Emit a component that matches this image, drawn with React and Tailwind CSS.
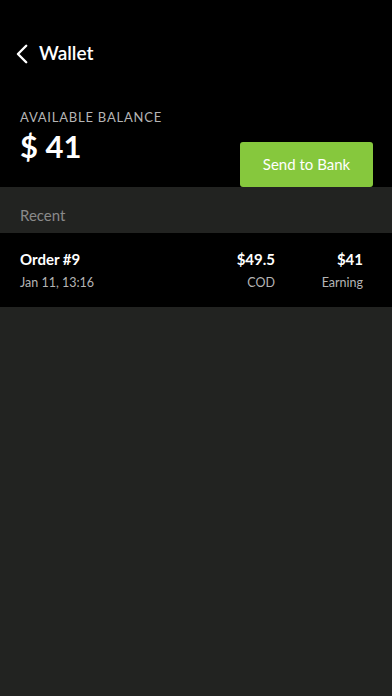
import React from "react";

const App = () => {
  return (
    <div
      className="min-h-[696px] w-full bg-[#222321] text-white"
      style={{ fontFamily: "Lato, 'Open Sans', sans-serif" }}
    >
      <div className="bg-black">
        <div className="flex h-[108px] items-center pb-[1px] pl-[13px]">
          <svg className="h-[22px] w-[22px]" viewBox="0 0 20 20" fill="none">
            <path
              d="M12 2.5 4.5 10l7.5 7.5"
              stroke="white"
              strokeWidth="2.2"
              strokeLinecap="round"
              strokeLinejoin="round"
            />
          </svg>
          <span className="ml-[4px] text-[19px] font-semibold">Wallet</span>
        </div>
        <div className="flex items-end justify-between pl-5 pr-[19px]">
          <div className="pb-[23px]">
            <div className="text-[13px] tracking-[0.06em] text-[#b5b5b5]">
              AVAILABLE BALANCE
            </div>
            <div className="text-[31px] font-bold leading-[36px]">$ 41</div>
          </div>
          <button className="h-[45px] w-[133px] rounded-[3px] bg-[#86c83d] text-[15px] text-white">
            Send to Bank
          </button>
        </div>
      </div>
      <div className="flex h-[46px] items-center px-5 pt-[11px] text-[15px] text-[#8a8a8a]">
        Recent
      </div>
      <div className="flex h-[74px] items-center bg-black pl-5 pr-[29px] pt-[2px]">
        <div className="flex-1">
          <div className="text-[15px] font-bold">Order #9</div>
          <div className="mt-[4px] text-[12.5px] text-[#b5b5b5]">Jan 11, 13:16</div>
        </div>
        <div className="text-right">
          <div className="text-[15px] font-bold">$49.5</div>
          <div className="mt-[4px] text-[12.5px] text-[#b5b5b5]">COD</div>
        </div>
        <div className="w-[88px] text-right">
          <div className="text-[15px] font-bold">$41</div>
          <div className="mt-[4px] text-[12.5px] text-[#b5b5b5]">Earning</div>
        </div>
      </div>
    </div>
  );
};

export default App;
